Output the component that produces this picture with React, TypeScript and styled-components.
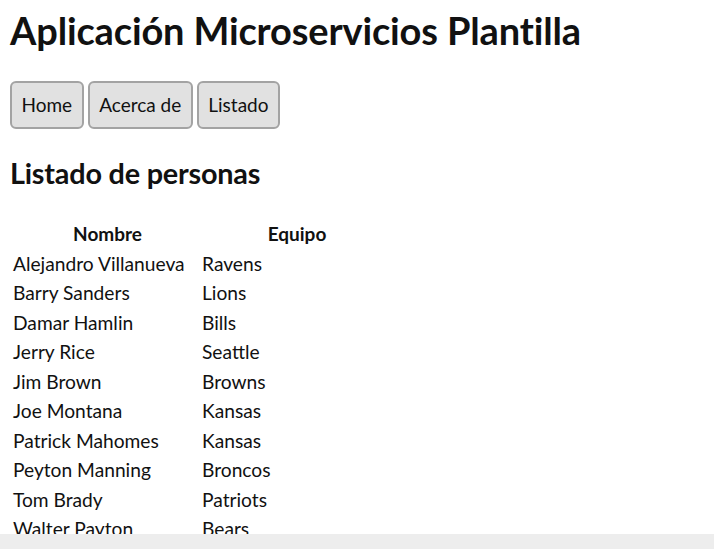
import React from "react";
import styled, { createGlobalStyle } from "styled-components";

const Global = createGlobalStyle`
  html, body { margin: 0; padding: 0; background: #ffffff; }
  body {
    font-family: Lato, "Noto Sans", sans-serif;
    color: #111111;
    overflow: hidden;
  }
`;

const Page = styled.div`
  padding: 0 10px;
`;

const Title = styled.h1`
  margin: 0;
  padding-top: 4px;
  font-size: 38px;
  line-height: 52px;
  font-weight: 700;
  letter-spacing: -0.15px;
`;

const Nav = styled.nav`
  display: flex;
  gap: 4px;
  margin-top: 25px;
`;

const NavButton = styled.button`
  font-family: inherit;
  font-size: 19px;
  line-height: 24px;
  color: #111111;
  background: #e1e1e1;
  border: 2px solid #a3a3a3;
  border-radius: 6px;
  padding: 10px 9.5px;
  height: 48px;
  cursor: pointer;
`;

const Heading = styled.h2`
  margin: 25px 0 0 0;
  font-size: 28.8px;
  line-height: 38px;
  font-weight: 700;
  letter-spacing: -0.2px;
`;

const Table = styled.div`
  display: grid;
  grid-template-columns: 189px 190px;
  margin-top: 27px;
  padding-left: 3px;
`;

const HeadCell = styled.div`
  font-size: 19px;
  font-weight: 700;
  line-height: 29.5px;
  text-align: center;
`;

const Cell = styled.div`
  font-size: 19.2px;
  line-height: 29.5px;
  white-space: nowrap;
`;

const ScrollBar = styled.div`
  position: fixed;
  left: 0;
  right: 0;
  bottom: 0;
  height: 15px;
  background: #ededed;
`;

const rows: [string, string][] = [
  ["Alejandro Villanueva", "Ravens"],
  ["Barry Sanders", "Lions"],
  ["Damar Hamlin", "Bills"],
  ["Jerry Rice", "Seattle"],
  ["Jim Brown", "Browns"],
  ["Joe Montana", "Kansas"],
  ["Patrick Mahomes", "Kansas"],
  ["Peyton Manning", "Broncos"],
  ["Tom Brady", "Patriots"],
  ["Walter Payton", "Bears"],
];

export default function App() {
  return (
    <>
      <Global />
      <Page>
        <Title>Aplicación Microservicios Plantilla</Title>
        <Nav>
          <NavButton>Home</NavButton>
          <NavButton>Acerca de</NavButton>
          <NavButton>Listado</NavButton>
        </Nav>
        <Heading>Listado de personas</Heading>
        <Table>
          <HeadCell>Nombre</HeadCell>
          <HeadCell>Equipo</HeadCell>
          {rows.map(([n, e]) => (
            <React.Fragment key={n}>
              <Cell>{n}</Cell>
              <Cell>{e}</Cell>
            </React.Fragment>
          ))}
        </Table>
      </Page>
      <ScrollBar />
    </>
  );
}
